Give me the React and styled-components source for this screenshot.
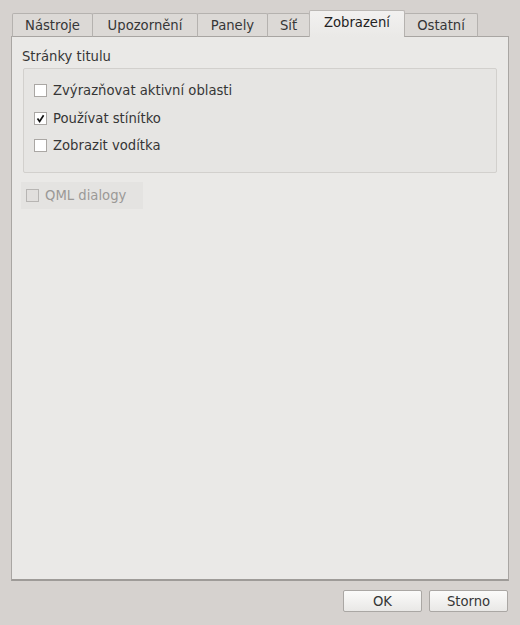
import styled, { createGlobalStyle } from "styled-components";

const Global = createGlobalStyle`
  html, body {
    margin: 0;
    padding: 0;
    background: #d6d2cf;
  }
  body {
    font-family: "DejaVu Sans", sans-serif;
    font-size: 13.2px;
    color: #363636;
  }
`;

const Window = styled.div`
  width: 520px;
  height: 625px;
  box-sizing: border-box;
  padding: 11px 11px 0 11px;
  display: flex;
  flex-direction: column;
`;

const TabBar = styled.div`
  display: flex;
  align-items: flex-end;
  height: 26px;
  padding-left: 2px;
  position: relative;
  z-index: 1;
`;

const Tab = styled.div`
  box-sizing: border-box;
  width: ${(p) => p.w}px;
  height: ${(p) => (p.active ? "27px" : "24px")};
  display: flex;
  align-items: center;
  justify-content: center;
  padding-bottom: ${(p) => (p.active ? "3px" : "0")};
  background: ${(p) =>
    p.active ? "linear-gradient(#f2f1f0, #eae9e7)" : "#dcd9d6"};
  border: 1px solid ${(p) => (p.active ? "#bbb8b5" : "#b5b2af")};
  border-bottom: ${(p) => (p.active ? "none" : "1px solid #a8a5a2")};
  border-radius: 2px 2px 0 0;
  margin-left: -1px;
  color: ${(p) => (p.active ? "#222" : "#363636")};
  white-space: nowrap;
`;

const Panel = styled.div`
  box-sizing: border-box;
  height: 545px;
  margin-top: -1px;
  background: #eae9e7;
  border: 1px solid #a9a6a3;
  border-bottom: 2px solid #9e9b98;
  padding: 12px 11px 0 11px;
  display: flex;
  flex-direction: column;
`;

const GroupTitle = styled.div`
  line-height: 16px;
  margin-left: -1px;
`;

const Group = styled.div`
  margin-top: 3px;
  height: 105px;
  box-sizing: border-box;
  background: #e6e5e3;
  border: 1px solid #d2d0cd;
  border-radius: 2px;
  padding: 15px 10px 0 10px;
  display: flex;
  flex-direction: column;
  gap: 14.5px;
`;

const Row = styled.label`
  display: flex;
  align-items: center;
  gap: 6px;
  height: 13px;
  color: ${(p) => (p.disabled ? "#9b9997" : "#363636")};
`;

const Box = styled.span`
  width: 13px;
  height: 13px;
  box-sizing: border-box;
  border: 1px solid ${(p) => (p.disabled ? "#b7b5b3" : "#aaa7a4")};
  background: ${(p) => (p.disabled ? "#e1dfdd" : "#ffffff")};
  display: flex;
  align-items: center;
  justify-content: center;
  flex-shrink: 0;
`;

const Disabled = styled.div`
  margin-top: 9px;
  margin-left: -2px;
  width: 122px;
  height: 27px;
  box-sizing: border-box;
  background: #e4e3e1;
  padding-left: 5px;
  display: flex;
  align-items: center;
`;

const Buttons = styled.div`
  display: flex;
  justify-content: flex-end;
  gap: 7px;
  margin-top: 9px;
  padding-right: 1px;
`;

const Button = styled.div`
  width: 79px;
  height: 22px;
  box-sizing: border-box;
  padding-top: 1px;
  border: 1px solid #aaa7a4;
  border-radius: 2px;
  background: linear-gradient(#fbfbfa, #e9e8e6);
  display: flex;
  align-items: center;
  justify-content: center;
  color: #363636;
`;

const Check = () => (
  <svg width="9" height="9" viewBox="0 0 9 9">
    <path
      d="M1.5 4.5 L3.6 7.4 L7.6 1.2"
      fill="none"
      stroke="#111"
      strokeWidth="1.7"
    />
  </svg>
);

const CheckRow = ({ checked, disabled, children }) => (
  <Row disabled={disabled}>
    <Box disabled={disabled}>{checked && <Check />}</Box>
    {children}
  </Row>
);

const tabs = [
  ["Nástroje", 81],
  ["Upozornění", 106],
  ["Panely", 71],
  ["Síť", 43],
  ["Zobrazení", 96],
  ["Ostatní", 74],
];

export default function App() {
  return (
    <>
      <Global />
      <Window>
        <TabBar>
          {tabs.map(([t, w]) => (
            <Tab key={t} w={w} active={t === "Zobrazení"}>
              {t}
            </Tab>
          ))}
        </TabBar>
        <Panel>
          <GroupTitle>Stránky titulu</GroupTitle>
          <Group>
            <CheckRow>Zvýrazňovat aktivní oblasti</CheckRow>
            <CheckRow checked>Používat stínítko</CheckRow>
            <CheckRow>Zobrazit vodítka</CheckRow>
          </Group>
          <Disabled>
            <CheckRow disabled>QML dialogy</CheckRow>
          </Disabled>
        </Panel>
        <Buttons>
          <Button>OK</Button>
          <Button>Storno</Button>
        </Buttons>
      </Window>
    </>
  );
}
